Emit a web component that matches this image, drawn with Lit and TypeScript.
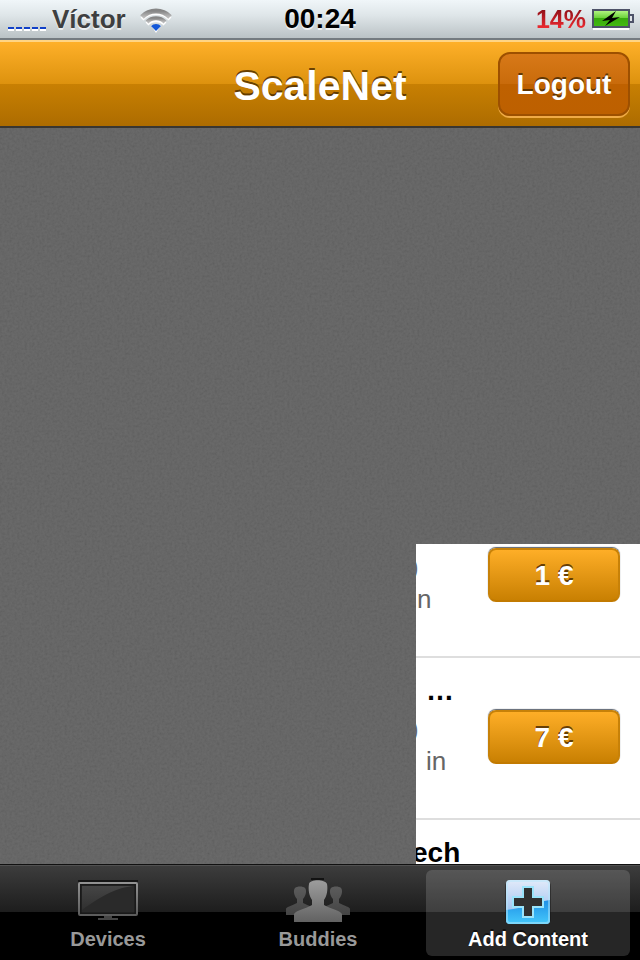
import { LitElement, html, css, svg } from "lit";
import { customElement, property } from "lit/decorators.js";
import { styleMap } from "lit/directives/style-map.js";

interface Line {
  text: string;
  shift: number;
}

interface Offer {
  title: Line;
  details: Line[];
  price: string;
}

const offers: Offer[] = [
  {
    title: { text: "", shift: 0 },
    details: [{ text: ")", shift: -6 }, { text: "n", shift: 1 }],
    price: "1 €",
  },
  {
    title: { text: "…", shift: 10 },
    details: [{ text: ")", shift: -6 }, { text: "in", shift: 10 }],
    price: "7 €",
  },
  {
    title: { text: "ech", shift: -4 },
    details: [],
    price: "",
  },
];

const monitorIcon = svg`
  <svg width="62" height="46" viewBox="0 0 62 46" aria-hidden="true">
    <defs>
      <linearGradient id="frame" x1="0" y1="0" x2="0" y2="1">
        <stop offset="0" stop-color="#929292" /><stop offset="1" stop-color="#5c5c5c" />
      </linearGradient>
      <linearGradient id="glare" x1="0" y1="0" x2="0" y2="1">
        <stop offset="0" stop-color="#454545" /><stop offset="1" stop-color="#303030" />
      </linearGradient>
    </defs>
    <rect x="1" y="2" width="60" height="2" fill="#151515" />
    <rect x="2" y="5" width="58" height="32" rx="1" fill="#1d1d1d" stroke="url(#frame)" stroke-width="2" />
    <rect x="4" y="7" width="54" height="28" fill="#2a2a2a" stroke="#161616" stroke-width="1" />
    <path d="M5 8H56C40 10 27 16 5 32Z" fill="url(#glare)" />
    <path d="M27 38h8v2h6v2H21v-2h6Z" fill="#454545" />
  </svg>`;

const peopleIcon = svg`
  <svg width="64" height="46" viewBox="0 0 64 46" aria-hidden="true">
    <defs>
      <linearGradient id="front" x1="0" y1="0" x2="0" y2="1">
        <stop offset="0" stop-color="#9d9d9d" /><stop offset="1" stop-color="#626262" />
      </linearGradient>
      <linearGradient id="back" x1="0" y1="0" x2="0" y2="1">
        <stop offset="0" stop-color="#5c5c5c" /><stop offset="1" stop-color="#444" />
      </linearGradient>
    </defs>
    <g fill="url(#back)">
      <path d="M0 37V31C0 29 5 28 11 25V21C8 18 7 12 9 10C11 8 17 8 19 10C21 12 20 18 17 21V25C23 28 28 29 28 31V37Z" />
      <path d="M64 37V31C64 29 59 28 53 25V21C56 18 57 12 55 10C53 8 47 8 45 10C43 12 44 18 47 21V25C41 28 36 29 36 31V37Z" />
    </g>
    <path d="M25 1H38" stroke="#121212" stroke-width="2" />
    <path d="M8 44V36C10 32 20 31 26 27V22C23 18 22 11 23 6C24 1 39 1 41 6C42 11 41 18 38 22V27C44 31 54 32 56 36V44Z" fill="url(#front)" />
  </svg>`;

const plusIcon = svg`
  <svg width="48" height="46" viewBox="0 0 48 46" aria-hidden="true">
    <defs>
      <linearGradient id="tile" x1="0" y1="0" x2="0" y2="1">
        <stop offset="0" stop-color="#e2eaf9" /><stop offset="1" stop-color="#88b6ee" />
      </linearGradient>
      <linearGradient id="wave" x1="0" y1="0" x2="0" y2="1">
        <stop offset="0" stop-color="#1f8fe6" /><stop offset="1" stop-color="#45c9fb" />
      </linearGradient>
    </defs>
    <rect x="1" y="3" width="46" height="43" rx="5" fill="#111" opacity=".45" />
    <rect x="2" y="2" width="44" height="44" rx="4" fill="url(#tile)" />
    <path d="M2 32C18 31 29 24 46 22V42Q46 46 42 46H6Q2 46 2 42Z" fill="url(#wave)" />
    <rect x="3" y="3" width="42" height="42" rx="3" fill="none" stroke="#b5e7fc" stroke-width="2" opacity=".5" />
    <path d="M20 10H28V20H38V28H28V38H20V28H10V20H20Z" fill="#313131" stroke="#9be4fb" stroke-width="4" />
    <path d="M20 10H28V20H38V28H28V38H20V28H10V20H20Z" fill="#313131" />
  </svg>`;

@customElement("status-bar")
export class StatusBar extends LitElement {
  static styles = css`
    :host {
      display: grid;
      grid-template-columns: 1fr auto 1fr;
      align-items: center;
      height: 40px;
      box-sizing: border-box;
      border-bottom: 2px solid #747b80;
      background: linear-gradient(#f0f6f9, #dfe6e9 40%, #bac2c5);
      font: bold 26px/38px "Liberation Sans", sans-serif;
      color: #3e3f40;
      text-shadow: 0 2px 0 rgba(255, 255, 255, 0.7);
    }
    .side { display: flex; align-items: center; }
    .carrier { padding-left: 8px; }
    .power { justify-content: flex-end; gap: 6px; padding-right: 6px; }
    .signal { margin-right: 6px; }
    .wifi { margin-left: 14px; }
    .time { color: #000; font-size: 28px; }
    .level {
      font-size: 25px;
      background: linear-gradient(#8e1018 25%, #f02a30 75%);
      background-clip: text;
      color: transparent;
      text-shadow: none;
    }
    svg { display: block; }
  `;

  render() {
    return html`
      <div class="side carrier">
        <svg class="signal" width="38" height="34" viewBox="0 0 38 34" aria-hidden="true">
          <path d="M0 28H38" stroke="#fff" stroke-width="2" stroke-dasharray="6 2" />
          <path d="M0 26H38" stroke="#1040c8" stroke-width="2" stroke-dasharray="6 2" />
        </svg>
        <span>Víctor</span>
        <svg class="wifi" width="34" height="28" viewBox="0 0 34 28" aria-hidden="true">
          <defs>
            <linearGradient id="wave" x1="0" y1="0" x2="0" y2="1">
              <stop offset="0" stop-color="#868686" /><stop offset="1" stop-color="#bcbcbc" />
            </linearGradient>
          </defs>
          <g fill="none">
            <g stroke="#fff" stroke-width="4">
              <path d="M2 14A19.5 19.5 0 0 1 30 14" />
              <path d="M7 19A12.5 12.5 0 0 1 25 19" />
            </g>
            <g stroke="url(#wave)">
              <path d="M2 12A19.5 19.5 0 0 1 30 12" stroke-width="5" />
              <path d="M7 17A12.5 12.5 0 0 1 25 17" stroke-width="4" />
            </g>
          </g>
          <path d="M11 20L16 28L21 20Z" fill="#fff" />
          <path d="M11 21A7 7 0 0 1 21 21L16 26Z" fill="#1458d8" />
        </svg>
      </div>
      <span class="time">00:24</span>
      <div class="side power">
        <span class="level">14%</span>
        <svg width="42" height="22" viewBox="0 0 42 22" aria-hidden="true">
          <defs>
            <linearGradient id="charge" x1="0" y1="0" x2="0" y2="1">
              <stop offset="0" stop-color="#b9f78a" />
              <stop offset=".45" stop-color="#6ed33c" />
              <stop offset=".5" stop-color="#38aa0c" />
              <stop offset="1" stop-color="#43bb12" />
            </linearGradient>
          </defs>
          <path d="M1 21H37" stroke="#fff" stroke-width="2" />
          <rect x="1" y="2" width="36" height="17" fill="url(#charge)" stroke="#4d5268" stroke-width="2" />
          <path d="M38 7H41V14H38" fill="#dfe3e6" stroke="#4d5268" stroke-width="2" />
          <path d="M24 3L10 13L18 12L13 18L28 9L20 10Z" fill="#000" />
        </svg>
      </div>
    `;
  }
}

@customElement("nav-header")
export class NavHeader extends LitElement {
  static styles = css`
    :host {
      display: grid;
      grid-template-columns: 1fr auto 1fr;
      align-items: center;
      height: 88px;
      box-sizing: border-box;
      border-top: 2px solid #ffd584;
      border-bottom: 2px solid #393631;
      padding-right: 10px;
      padding-left: 10px;
      background: linear-gradient(#feb029, #dd920e 50%, #c88003 50%, #ad6c00);
      font-family: "Liberation Sans", sans-serif;
      color: #fff;
      text-shadow: 0 -2px 0 rgba(70, 40, 0, 0.8);
    }
    h1 { grid-column: 2; margin: 4px 0 0; font-size: 41px; line-height: 48px; }
    button {
      justify-self: end;
      width: 132px;
      height: 64px;
      box-sizing: border-box;
      padding: 2px 0 0;
      border: 2px solid #9d5000;
      border-radius: 12px;
      background: linear-gradient(#d87918, #c96b0b 50%, #bf6100 50%, #bd6000);
      box-shadow: 0 2px 0 #f0aa45;
      font: bold 28px/32px "Liberation Sans", sans-serif;
      color: inherit;
      text-shadow: inherit;
    }
  `;

  render() {
    return html`<h1>ScaleNet</h1><button type="button">Logout</button>`;
  }
}

@customElement("offer-list")
export class OfferList extends LitElement {
  static styles = css`
    :host {
      display: block;
      overflow: hidden;
      background: #fff;
      font-family: "Liberation Sans", sans-serif;
    }
    ul { list-style: none; margin: -48px 0 0; padding: 0; }
    li {
      display: flex;
      justify-content: space-between;
      align-items: flex-start;
      height: 162px;
      box-sizing: border-box;
      border-bottom: 2px solid #dedede;
      padding: 16px 20px 0 0;
    }
    .text { white-space: nowrap; }
    .title { height: 39px; font-size: 28px; font-weight: bold; line-height: 34px; color: #000; }
    .detail { font-size: 26px; line-height: 32px; color: #666; }
    button {
      width: 132px;
      height: 54px;
      box-sizing: border-box;
      margin-top: 36px;
      padding: 2px 0 0;
      border: 2px solid #c78108;
      border-bottom-color: #c27a00;
      border-radius: 8px;
      background: linear-gradient(#feae27, #c98002);
      box-shadow: 0 -1px 1px #5c6470;
      font: bold 28px/32px "Liberation Sans", sans-serif;
      color: #fff;
      text-shadow: 0 -2px 0 rgba(80, 46, 0, 0.85);
    }
  `;

  private line(name: string, line: Line) {
    return html`<div class=${name} style=${styleMap({ marginLeft: `${line.shift}px` })}>${line.text}</div>`;
  }

  render() {
    return html`
      <ul>
        ${offers.map(
          (offer) => html`
            <li>
              <div class="text">
                ${this.line("title", offer.title)}
                ${offer.details.map((detail) => this.line("detail", detail))}
              </div>
              ${offer.price ? html`<button type="button">${offer.price}</button>` : null}
            </li>
          `
        )}
      </ul>
    `;
  }
}

@customElement("tab-bar")
export class TabBar extends LitElement {
  @property() selected = "Add Content";

  static styles = css`
    :host { display: block; }
    nav {
      display: grid;
      grid-template-columns: repeat(3, 1fr);
      gap: 6px;
      height: 96px;
      box-sizing: border-box;
      border-top: 1px solid #111;
      padding: 5px 10px 4px 6px;
      background: linear-gradient(#3d3d3d, #1d1d1d 47px, #000 47px);
      box-shadow: inset 0 1px 0 #505050;
    }
    button {
      display: flex;
      flex-direction: column;
      align-items: center;
      padding: 8px 0 0;
      border: 0;
      border-radius: 6px;
      background: none;
      font: bold 20px/24px "Liberation Sans", sans-serif;
      color: #999;
    }
    .selected { background: rgba(255, 255, 255, 0.15); color: #fff; text-shadow: 0 -2px 0 #111; }
    svg { display: block; }
    .label { margin-top: 3px; }
  `;

  render() {
    const tabs = [
      { label: "Devices", icon: monitorIcon },
      { label: "Buddies", icon: peopleIcon },
      { label: "Add Content", icon: plusIcon },
    ];
    return html`
      <nav>
        ${tabs.map(
          (tab) => html`
            <button
              type="button"
              class=${tab.label === this.selected ? "selected" : ""}
              @click=${() => (this.selected = tab.label)}
            >
              ${tab.icon}<span class="label">${tab.label}</span>
            </button>
          `
        )}
      </nav>
    `;
  }
}

@customElement("app-root")
export class AppRoot extends LitElement {
  static styles = css`
    :host { display: flex; flex-direction: column; min-height: 100vh; }
    main {
      position: relative;
      flex: 1;
      display: flex;
      align-items: flex-end;
      justify-content: flex-end;
      background: #616161;
    }
    .grain { position: absolute; inset: 0; width: 100%; height: 100%; opacity: 0.08; }
    offer-list { position: relative; width: 35%; height: 320px; }
  `;

  render() {
    return html`
      <status-bar></status-bar>
      <nav-header></nav-header>
      <main>
        <svg class="grain" aria-hidden="true">
          <filter id="noise" x="0" y="0" width="100%" height="100%">
            <feTurbulence type="fractalNoise" baseFrequency="0.4" numOctaves="2" seed="4" />
            <feColorMatrix values="0.9 0 0 0 -0.05  0.9 0 0 0 -0.05  0.9 0 0 0 -0.05  0 0 0 0 1" />
          </filter>
          <rect width="100%" height="100%" filter="url(#noise)" />
        </svg>
        <offer-list></offer-list>
      </main>
      <tab-bar></tab-bar>
    `;
  }
}
